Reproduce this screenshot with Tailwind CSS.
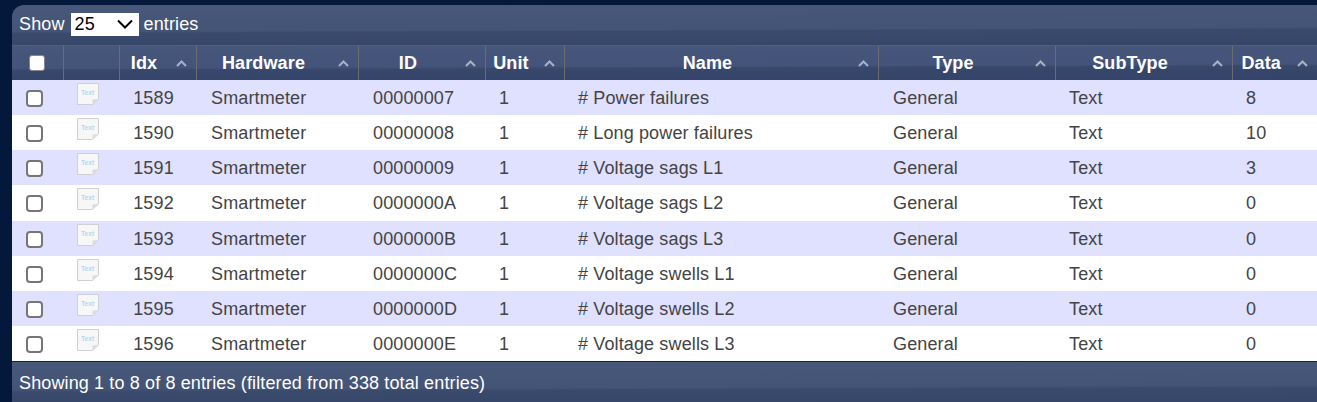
<!DOCTYPE html>
<html lang="en">
<head>
    <meta charset="UTF-8" />
    <title>Devices</title>
    <script src="https://cdn.jsdelivr.net/npm/@tailwindcss/browser@4"></script>
</head>
<body class="h-[402px] overflow-hidden bg-[#03183a] font-['Liberation_Sans',Arial,sans-serif] text-[18px] tracking-[0.13px]">
<svg width="0" height="0" class="absolute">
    <defs>
        <g id="text-icon">
            <path d="M.5 .5H21.500V16L15.500 21.500H.5Z" fill="#f7f7f7" stroke="#cfcfd6" />
            <path d="M21.500 16L15.500 16.500V21.500Z" fill="#dcdce0" />
            <text x="4" y="12" font-size="6.500" font-weight="700" fill="#a9dcf4" font-family="Liberation Sans">Text</text>
        </g>
        <path id="sort-up" d="M1 6l4.500-4.500L10 6" fill="none" stroke="#aab2c2" stroke-width="2" />
    </defs>
</svg>
<div class="ml-3 mt-[5px] w-[1305px] rounded-tl-xl overflow-hidden">
    <div class="h-[41px] flex items-center gap-[5px] pb-[2px] pl-[7px] text-white border-b border-[#5b6067] bg-[linear-gradient(179.8deg,#48587b_0%,#445476_60%,#3a4a6c_64%,#36466a_100%)]">
        <span>Show</span>
        <select class="ml-px w-[68px] h-[23px] leading-[20px] bg-white text-black pl-[4px] appearance-none bg-no-repeat bg-[position:right_5px_center] bg-[url('data:image/svg+xml,%3Csvg%20xmlns=%22http://www.w3.org/2000/svg%22%20width=%2218%22%20height=%2210%22%3E%3Cpath%20d=%22M2%201.5l7%207%207-7%22%20fill=%22none%22%20stroke=%22black%22%20stroke-width=%222%22/%3E%3C/svg%3E')]">
            <option>25</option>
        </select>
        <span>entries</span>
    </div>
    <table class="w-[1305px] table-fixed border-collapse text-[#444]">
        <colgroup>
            <col class="w-[51px]" />
            <col class="w-[56px]" />
            <col class="w-[77px]" />
            <col class="w-[162px]" />
            <col class="w-[127px]" />
            <col class="w-[79px]" />
            <col class="w-[314px]" />
            <col class="w-[177px]" />
            <col class="w-[177px]" />
            <col class="w-[85px]" />
        </colgroup>
        <thead>
            <tr class="h-[34px] text-white font-bold bg-[linear-gradient(179.8deg,#47577a_0%,#43537a_58%,#38486b_64%,#33436a_100%)]">
                <th class="border-r border-[#6a6c70]"><input type="checkbox" class="block mx-auto size-4 appearance-none bg-white rounded-[3px] border border-[#888]" /></th>
                <th class="border-r border-[#6a6c70]"></th>
                <th class="border-r border-[#6a6c70] relative pr-[27px] text-center font-bold">Idx<svg class="absolute right-[9px] top-[14px]" width="11" height="7" viewBox="0 0 11 7"><use href="#sort-up" /></svg></th>
                <th class="border-r border-[#6a6c70] relative pr-[27px] text-center font-bold">Hardware<svg class="absolute right-[9px] top-[14px]" width="11" height="7" viewBox="0 0 11 7"><use href="#sort-up" /></svg></th>
                <th class="border-r border-[#6a6c70] relative pr-[27px] text-center font-bold">ID<svg class="absolute right-[9px] top-[14px]" width="11" height="7" viewBox="0 0 11 7"><use href="#sort-up" /></svg></th>
                <th class="border-r border-[#6a6c70] relative pr-[27px] text-center font-bold">Unit<svg class="absolute right-[9px] top-[14px]" width="11" height="7" viewBox="0 0 11 7"><use href="#sort-up" /></svg></th>
                <th class="border-r border-[#6a6c70] relative pr-[27px] text-center font-bold">Name<svg class="absolute right-[9px] top-[14px]" width="11" height="7" viewBox="0 0 11 7"><use href="#sort-up" /></svg></th>
                <th class="border-r border-[#6a6c70] relative pr-[27px] text-center font-bold">Type<svg class="absolute right-[9px] top-[14px]" width="11" height="7" viewBox="0 0 11 7"><use href="#sort-up" /></svg></th>
                <th class="border-r border-[#6a6c70] relative pr-[27px] text-center font-bold">SubType<svg class="absolute right-[9px] top-[14px]" width="11" height="7" viewBox="0 0 11 7"><use href="#sort-up" /></svg></th>
                <th class="relative pr-[27px] text-center font-bold">Data<svg class="absolute right-[9px] top-[14px]" width="11" height="7" viewBox="0 0 11 7"><use href="#sort-up" /></svg></th>
            </tr>
        </thead>
        <tbody>
            <tr class="h-[35.125px] bg-[#e0e0ff]">
                <td class="pl-[14px] pt-[2px]"><input type="checkbox" class="block size-[17px] appearance-none bg-white rounded-[4px] border-2 border-[#767676]" /></td>
                <td class="pl-[14px]"><svg class="-mt-[6px]" width="23" height="23"><use href="#text-icon" /></svg></td>
                <td class="text-center pr-[8px] pt-[2px]">1589</td><td class="pl-[15px] pt-[2px]">Smartmeter</td><td class="pl-[15px] pt-[2px]">00000007</td><td class="pl-[14px] pt-[2px]">1</td><td class="pl-[14px] pt-[2px]"># Power failures</td><td class="pl-[15px] pt-[2px]">General</td><td class="pl-[14px] pt-[2px]">Text</td><td class="pl-[14px] pt-[2px]">8</td>
            </tr>
            <tr class="h-[35.125px] bg-white">
                <td class="pl-[14px] pt-[2px]"><input type="checkbox" class="block size-[17px] appearance-none bg-white rounded-[4px] border-2 border-[#767676]" /></td>
                <td class="pl-[14px]"><svg class="-mt-[6px]" width="23" height="23"><use href="#text-icon" /></svg></td>
                <td class="text-center pr-[8px] pt-[2px]">1590</td><td class="pl-[15px] pt-[2px]">Smartmeter</td><td class="pl-[15px] pt-[2px]">00000008</td><td class="pl-[14px] pt-[2px]">1</td><td class="pl-[14px] pt-[2px]"># Long power failures</td><td class="pl-[15px] pt-[2px]">General</td><td class="pl-[14px] pt-[2px]">Text</td><td class="pl-[14px] pt-[2px]">10</td>
            </tr>
            <tr class="h-[35.125px] bg-[#e0e0ff]">
                <td class="pl-[14px] pt-[2px]"><input type="checkbox" class="block size-[17px] appearance-none bg-white rounded-[4px] border-2 border-[#767676]" /></td>
                <td class="pl-[14px]"><svg class="-mt-[6px]" width="23" height="23"><use href="#text-icon" /></svg></td>
                <td class="text-center pr-[8px] pt-[2px]">1591</td><td class="pl-[15px] pt-[2px]">Smartmeter</td><td class="pl-[15px] pt-[2px]">00000009</td><td class="pl-[14px] pt-[2px]">1</td><td class="pl-[14px] pt-[2px]"># Voltage sags L1</td><td class="pl-[15px] pt-[2px]">General</td><td class="pl-[14px] pt-[2px]">Text</td><td class="pl-[14px] pt-[2px]">3</td>
            </tr>
            <tr class="h-[35.125px] bg-white">
                <td class="pl-[14px] pt-[2px]"><input type="checkbox" class="block size-[17px] appearance-none bg-white rounded-[4px] border-2 border-[#767676]" /></td>
                <td class="pl-[14px]"><svg class="-mt-[6px]" width="23" height="23"><use href="#text-icon" /></svg></td>
                <td class="text-center pr-[8px] pt-[2px]">1592</td><td class="pl-[15px] pt-[2px]">Smartmeter</td><td class="pl-[15px] pt-[2px]">0000000A</td><td class="pl-[14px] pt-[2px]">1</td><td class="pl-[14px] pt-[2px]"># Voltage sags L2</td><td class="pl-[15px] pt-[2px]">General</td><td class="pl-[14px] pt-[2px]">Text</td><td class="pl-[14px] pt-[2px]">0</td>
            </tr>
            <tr class="h-[35.125px] bg-[#e0e0ff]">
                <td class="pl-[14px] pt-[2px]"><input type="checkbox" class="block size-[17px] appearance-none bg-white rounded-[4px] border-2 border-[#767676]" /></td>
                <td class="pl-[14px]"><svg class="-mt-[6px]" width="23" height="23"><use href="#text-icon" /></svg></td>
                <td class="text-center pr-[8px] pt-[2px]">1593</td><td class="pl-[15px] pt-[2px]">Smartmeter</td><td class="pl-[15px] pt-[2px]">0000000B</td><td class="pl-[14px] pt-[2px]">1</td><td class="pl-[14px] pt-[2px]"># Voltage sags L3</td><td class="pl-[15px] pt-[2px]">General</td><td class="pl-[14px] pt-[2px]">Text</td><td class="pl-[14px] pt-[2px]">0</td>
            </tr>
            <tr class="h-[35.125px] bg-white">
                <td class="pl-[14px] pt-[2px]"><input type="checkbox" class="block size-[17px] appearance-none bg-white rounded-[4px] border-2 border-[#767676]" /></td>
                <td class="pl-[14px]"><svg class="-mt-[6px]" width="23" height="23"><use href="#text-icon" /></svg></td>
                <td class="text-center pr-[8px] pt-[2px]">1594</td><td class="pl-[15px] pt-[2px]">Smartmeter</td><td class="pl-[15px] pt-[2px]">0000000C</td><td class="pl-[14px] pt-[2px]">1</td><td class="pl-[14px] pt-[2px]"># Voltage swells L1</td><td class="pl-[15px] pt-[2px]">General</td><td class="pl-[14px] pt-[2px]">Text</td><td class="pl-[14px] pt-[2px]">0</td>
            </tr>
            <tr class="h-[35.125px] bg-[#e0e0ff]">
                <td class="pl-[14px] pt-[2px]"><input type="checkbox" class="block size-[17px] appearance-none bg-white rounded-[4px] border-2 border-[#767676]" /></td>
                <td class="pl-[14px]"><svg class="-mt-[6px]" width="23" height="23"><use href="#text-icon" /></svg></td>
                <td class="text-center pr-[8px] pt-[2px]">1595</td><td class="pl-[15px] pt-[2px]">Smartmeter</td><td class="pl-[15px] pt-[2px]">0000000D</td><td class="pl-[14px] pt-[2px]">1</td><td class="pl-[14px] pt-[2px]"># Voltage swells L2</td><td class="pl-[15px] pt-[2px]">General</td><td class="pl-[14px] pt-[2px]">Text</td><td class="pl-[14px] pt-[2px]">0</td>
            </tr>
            <tr class="h-[35.125px] bg-white">
                <td class="pl-[14px] pt-[2px]"><input type="checkbox" class="block size-[17px] appearance-none bg-white rounded-[4px] border-2 border-[#767676]" /></td>
                <td class="pl-[14px]"><svg class="-mt-[6px]" width="23" height="23"><use href="#text-icon" /></svg></td>
                <td class="text-center pr-[8px] pt-[2px]">1596</td><td class="pl-[15px] pt-[2px]">Smartmeter</td><td class="pl-[15px] pt-[2px]">0000000E</td><td class="pl-[14px] pt-[2px]">1</td><td class="pl-[14px] pt-[2px]"># Voltage swells L3</td><td class="pl-[15px] pt-[2px]">General</td><td class="pl-[14px] pt-[2px]">Text</td><td class="pl-[14px] pt-[2px]">0</td>
            </tr>
        </tbody>
    </table>
    <div class="h-[41px] flex items-center pt-[3px] pl-[7px] text-white border-t border-[#222] bg-[linear-gradient(179.8deg,#48587b_0%,#445476_62%,#3a4a6c_68%,#36466a_100%)]">
        Showing 1 to 8 of 8 entries (filtered from 338 total entries)
    </div>
</div>
</body>
</html>
